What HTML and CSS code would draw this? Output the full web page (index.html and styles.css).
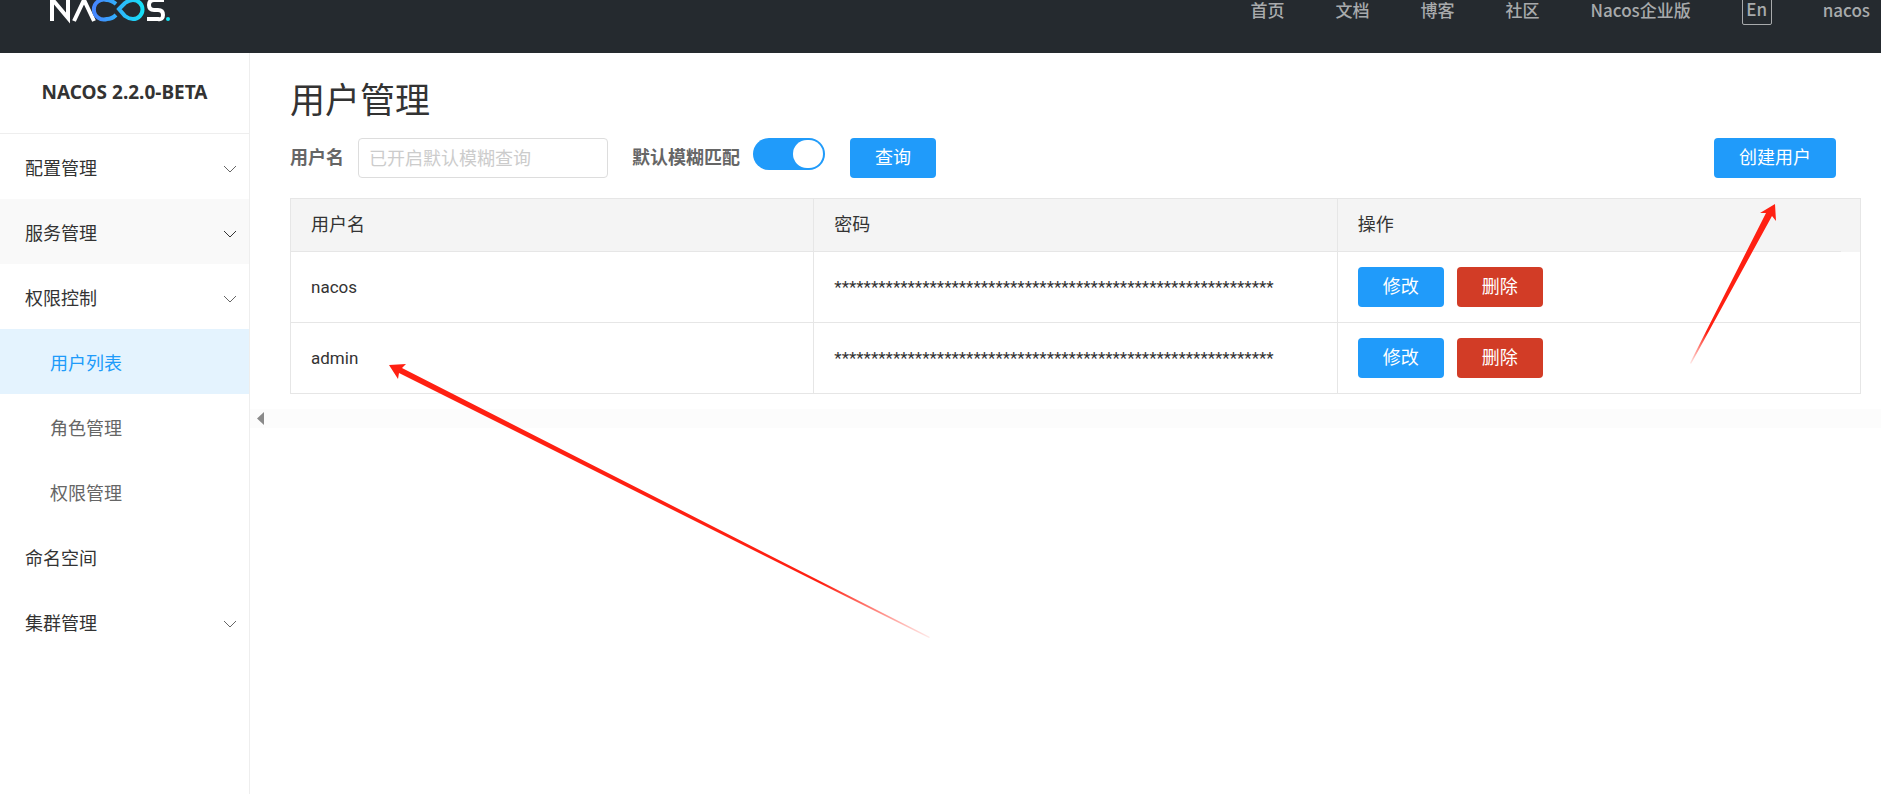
FILE: index.html
```html
<!DOCTYPE html>
<html lang="zh-CN">
<head>
  <meta charset="UTF-8">
  <meta name="viewport" content="width=device-width, initial-scale=1.0">
  <title>Nacos</title>
  <link rel="stylesheet" href="styles.css">
</head>
<body>
  <header class="header">
    <a href="#" class="logo" aria-label="Nacos">
      <svg width="122" height="34" viewBox="0 0 122 34">
        <defs>
          <linearGradient id="logoGradient" gradientUnits="userSpaceOnUse" x1="46" y1="0" x2="95" y2="0">
            <stop offset="0" stop-color="#4688ff"/>
            <stop offset="1" stop-color="#14e4f6"/>
          </linearGradient>
        </defs>
        <g fill="none" stroke="#fff" stroke-width="4">
          <path d="M2 31V9L18 28V8"/>
          <path d="M24 31L34 10L44 31"/>
          <path d="M114 10H104Q99 10 99 15T104 20H108Q113 20 113 25T108 29H97"/>
        </g>
        <path d="M66 25Q62 29 57 29A10 10 0 1 1 57 10Q61 10 66 14M69 19L75 13Q79 10 83 10A9 9 0 0 1 83 29Q79 29 75 26Z" fill="none" stroke="url(#logoGradient)" stroke-width="4"/>
        <circle cx="118" cy="29" r="2" fill="#14e4f6"/>
      </svg>
    </a>
    <nav class="nav">
      <a href="#">首页</a>
      <a href="#">文档</a>
      <a href="#">博客</a>
      <a href="#">社区</a>
      <a href="#">Nacos企业版</a>
      <button type="button" class="lang">En</button>
      <a href="#">nacos</a>
    </nav>
  </header>

  <div class="layout">
    <aside class="sidebar">
      <h1 class="version">NACOS 2.2.0-BETA</h1>
      <ul class="menu">
        <li><a href="#">配置管理 <svg class="arrow" viewBox="0 0 14 8"><path d="M1 1l6 6 6-6"/></svg></a></li>
        <li><a href="#" class="hover">服务管理 <svg class="arrow" viewBox="0 0 14 8"><path d="M1 1l6 6 6-6"/></svg></a></li>
        <li>
          <a href="#">权限控制 <svg class="arrow" viewBox="0 0 14 8"><path d="M1 1l6 6 6-6"/></svg></a>
          <ul class="submenu">
            <li><a href="#" class="active">用户列表</a></li>
            <li><a href="#">角色管理</a></li>
            <li><a href="#">权限管理</a></li>
          </ul>
        </li>
        <li><a href="#">命名空间</a></li>
        <li><a href="#">集群管理 <svg class="arrow" viewBox="0 0 14 8"><path d="M1 1l6 6 6-6"/></svg></a></li>
      </ul>
    </aside>

    <main class="main">
      <div class="content">
        <h2 class="title">用户管理</h2>
        <form class="search">
          <label for="username">用户名</label>
          <input type="text" id="username" placeholder="已开启默认模糊查询">
          <label for="fuzzy">默认模糊匹配</label>
          <input type="checkbox" id="fuzzy" class="switch" checked>
          <button type="button" class="btn">查询</button>
          <button type="button" class="btn create">创建用户</button>
        </form>
        <table>
          <thead>
            <tr>
              <th>用户名</th>
              <th>密码</th>
              <th class="last">操作</th>
            </tr>
          </thead>
          <tbody>
            <tr>
              <td>nacos</td>
              <td>************************************************************</td>
              <td>
                <div class="actions">
                  <button type="button" class="btn">修改</button>
                  <button type="button" class="btn danger">删除</button>
                </div>
              </td>
            </tr>
            <tr>
              <td>admin</td>
              <td>************************************************************</td>
              <td>
                <div class="actions">
                  <button type="button" class="btn">修改</button>
                  <button type="button" class="btn danger">删除</button>
                </div>
              </td>
            </tr>
          </tbody>
        </table>
      </div>
      <div class="scrollbar"></div>
    </main>
  </div>

  <svg class="note note-admin" width="544" height="274" viewBox="0 0 544 274">
    <defs>
      <linearGradient id="fadeAdmin" gradientUnits="userSpaceOnUse" x1="0" y1="0" x2="540" y2="272">
        <stop offset="0.8" stop-color="#ff2012"/>
        <stop offset="1" stop-color="#ff2012" stop-opacity="0.1"/>
      </linearGradient>
    </defs>
    <path d="M0 0L17 -1L13 3L541 272L540 273L10 8L9 14Z" fill="url(#fadeAdmin)"/>
  </svg>
  <svg class="note note-create" width="84" height="160" viewBox="0 0 84 160">
    <defs>
      <linearGradient id="fadeCreate" gradientUnits="userSpaceOnUse" x1="84" y1="0" x2="0" y2="160">
        <stop offset="0.8" stop-color="#ff2012"/>
        <stop offset="1" stop-color="#ff2012" stop-opacity="0.1"/>
      </linearGradient>
    </defs>
    <path d="M84 0L85 17L81 12L0 160L-1 159L75 9L69 9Z" fill="url(#fadeCreate)"/>
  </svg>
</body>
</html>
```
FILE: styles.css
```css
* {
  box-sizing: border-box;
  margin: 0;
  padding: 0;
}

body {
  font-family: Roboto, "Noto Sans CJK SC", sans-serif;
  font-size: 18px;
  line-height: 24px;
  color: #333;
  background: #fff;
  min-height: 100vh;
  display: flex;
  flex-direction: column;
  position: relative;
  overflow-x: hidden;
}

a {
  color: inherit;
  text-decoration: none;
}

ul {
  list-style: none;
}

button,
input {
  font: inherit;
}

/* header */
.header {
  display: flex;
  justify-content: space-between;
  align-items: flex-start;
  height: 53px;
  padding: 0 11px 0 50px;
  background: #252a2f;
}

.logo svg {
  display: block;
  margin-top: -10px;
}

.nav {
  display: flex;
  align-items: flex-start;
  gap: 51px;
  margin-top: -2px;
  font-family: "Noto Sans CJK SC", sans-serif;
  font-size: 17px;
  font-weight: 500;
  color: #a8aaac;
}

.lang {
  width: 30px;
  height: 27px;
  padding-bottom: 5px;
  line-height: 20px;
  color: inherit;
  background: none;
  border: 1px solid #a8aaac;
  border-radius: 2px;
}

/* sidebar */
.layout {
  flex: 1;
  display: flex;
}

.sidebar {
  width: 250px;
  flex-shrink: 0;
  border-right: 1px solid #eee;
}

.version {
  height: 81px;
  line-height: 78px;
  font-family: "Noto Sans", sans-serif;
  font-size: 19px;
  font-weight: 700;
  text-align: center;
  border-bottom: 1px solid #eee;
}

.menu a {
  display: flex;
  align-items: center;
  justify-content: space-between;
  height: 65px;
  padding: 5px 12px 0 25px;
}

.menu .hover {
  background: #f9f9f9;
}

.menu .submenu a {
  padding-left: 50px;
  color: #666;
}

.menu .submenu .active {
  color: #209bfa;
  background: #e4f3fe;
}

.arrow {
  width: 14px;
  height: 8px;
  fill: none;
  stroke: #666;
}

.hover .arrow {
  stroke: #333;
}

/* main */
.main {
  flex: 1;
  min-width: 0;
}

.content {
  padding: 24px 20px 15px 40px;
}

.title {
  font-size: 35px;
  font-weight: 400;
  line-height: 50px;
}

.search {
  display: flex;
  align-items: flex-start;
  padding: 11px 25px 20px 0;
}

.search label {
  line-height: 40px;
  font-weight: 700;
  color: #666;
}

.search input[type="text"] {
  width: 250px;
  height: 40px;
  margin: 0 24px 0 14px;
  padding: 0 10px;
  border: 1px solid #ddd;
  border-radius: 4px;
  color: #333;
}

.search input::placeholder {
  color: #ccc;
}

.switch {
  appearance: none;
  width: 72px;
  height: 32px;
  margin: 0 25px 0 13px;
  padding: 2px;
  border-radius: 16px;
  background: #209bfa;
}

.switch::before {
  content: "";
  display: block;
  width: 30px;
  height: 28px;
  margin-left: auto;
  border-radius: 15px;
  background: #fff;
}

.btn {
  height: 40px;
  padding: 0 25px;
  border: 0;
  border-radius: 4px;
  font-size: 18px;
  color: #fff;
  background: #209bfa;
  cursor: pointer;
}

.create {
  margin-left: auto;
}

.danger {
  background: #d23c26;
}

table {
  width: 100%;
  table-layout: fixed;
  border-collapse: collapse;
}

th,
td {
  padding: 0 20px;
  border: 1px solid #e6e6e6;
  font-weight: 400;
  text-align: left;
}

th {
  height: 53px;
  background: #f4f4f4;
}

td {
  height: 71px;
  font-size: 17px;
}

/* the head leaves room for a scroll bar, without its bottom line */
.last {
  position: relative;
}

.last::after {
  content: "";
  position: absolute;
  right: 0;
  bottom: -1px;
  width: 19px;
  height: 1px;
  background: #f4f4f4;
}

.actions {
  display: flex;
  gap: 13px;
}

.scrollbar {
  height: 19px;
  padding: 3px 7px;
  background: #fcfcfc;
}

.scrollbar::before {
  content: "";
  display: block;
  width: 7px;
  height: 13px;
  background: #8a8a8a;
  clip-path: polygon(0 50%, 100% 0, 100% 100%);
}

/* red arrows drawn over the page */
.note {
  position: absolute;
  overflow: visible;
  pointer-events: none;
}

.note-admin {
  left: 389px;
  top: 365px;
}

.note-create {
  right: 106px;
  top: 204px;
}
```
